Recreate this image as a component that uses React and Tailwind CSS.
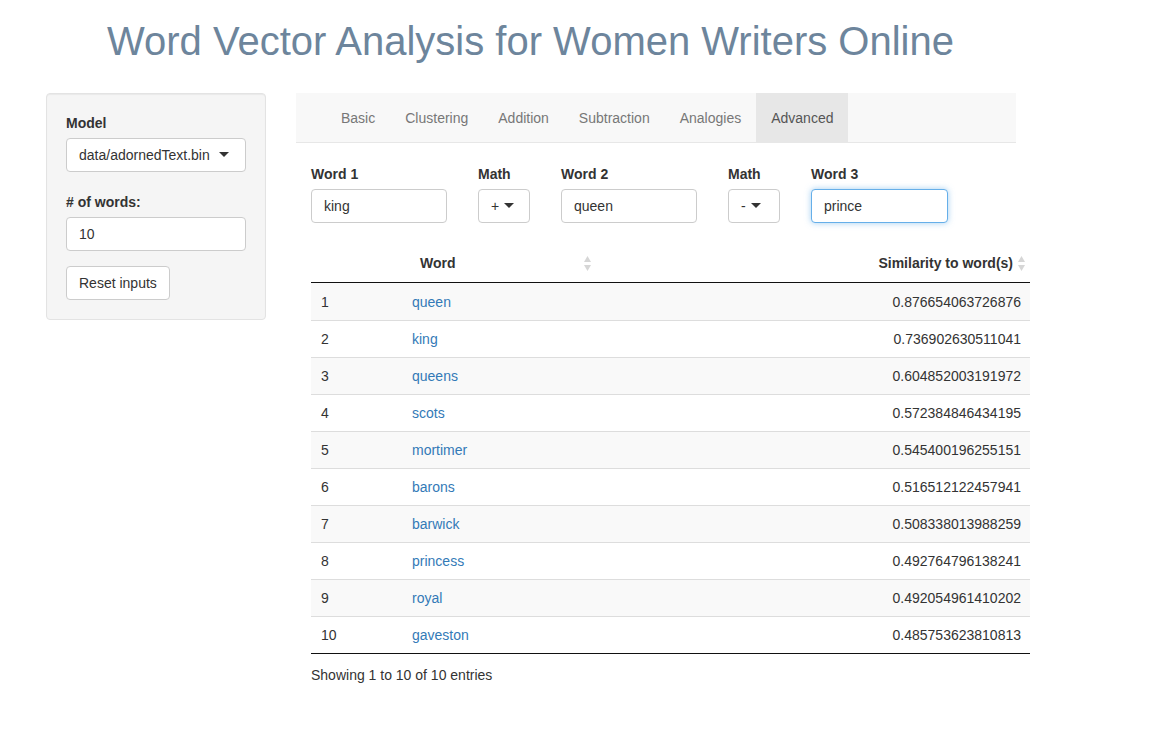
import React from "react";

const rows = [
  ["queen", "0.876654063726876"],
  ["king", "0.736902630511041"],
  ["queens", "0.604852003191972"],
  ["scots", "0.572384846434195"],
  ["mortimer", "0.545400196255151"],
  ["barons", "0.516512122457941"],
  ["barwick", "0.508338013988259"],
  ["princess", "0.492764796138241"],
  ["royal", "0.492054961410202"],
  ["gaveston", "0.485753623810813"],
];

const tabs = ["Basic", "Clustering", "Addition", "Subtraction", "Analogies", "Advanced"];

const Caret = () => (
  <svg width="10" height="6" viewBox="0 0 10 6" className="inline-block">
    <path d="M0 0 L10 0 L5 5 Z" fill="#333" />
  </svg>
);

const SortIcon = () => (
  <svg width="9" height="17" viewBox="0 0 9 17">
    <path d="M4.5 1 L8 7 L1 7 Z" fill="#d6d6d6" />
    <path d="M1 10 L8 10 L4.5 16 Z" fill="#d6d6d6" />
  </svg>
);

function TextInput({ value, focus, width }) {
  return (
    <div
      className={
        "h-[34px] rounded-[4px] bg-white px-3 flex items-center border " +
        (focus
          ? "border-[#66afe9] shadow-[0_0_6px_rgba(102,175,233,0.6)]"
          : "border-[#ccc]")
      }
      style={{ width }}
    >
      {value}
    </div>
  );
}

function MathSelect({ value }) {
  return (
    <div className="h-[34px] w-[52px] rounded-[4px] bg-white border border-[#ccc] flex items-center pl-3 gap-[5px]">
      <span>{value}</span>
      <Caret />
    </div>
  );
}

export default function App() {
  return (
    <div className="min-h-screen bg-white text-[14px] text-[#333] font-['Liberation_Sans',Arial,sans-serif]">
      <h1 className="pl-[107px] pt-[14px] text-[40px] leading-[54px] text-[#6d859c] font-normal">
        Word Vector Analysis for Women Writers Online
      </h1>

      <div className="flex items-start mt-[25px]">
        <div className="ml-[46px] w-[220px] bg-[#f5f5f5] border border-[#e3e3e3] rounded-[4px] p-[19px] shadow-[inset_0_1px_1px_rgba(0,0,0,0.05)]">
          <div className="font-bold leading-5 mb-[5px]">Model</div>
          <div className="h-[34px] rounded-[4px] bg-white border border-[#ccc] flex items-center justify-between pl-3 pr-[16px]">
            <span>data/adornedText.bin</span>
            <Caret />
          </div>
          <div className="font-bold leading-5 mt-[20px] mb-[5px]">
            # of words:
          </div>
          <div className="h-[34px] rounded-[4px] bg-white border border-[#ccc] flex items-center px-3">
            10
          </div>
          <div className="mt-[15px] inline-flex h-[34px] items-center px-3 rounded-[4px] bg-white border border-[#ccc]">
            Reset inputs
          </div>
        </div>

        <div className="ml-[30px] w-[720px]">
          <div className="h-[50px] bg-[#f8f8f8] border-b border-[#e7e7e7] flex pl-[30px]">
            {tabs.map((t) => (
              <div
                key={t}
                className={
                  "px-[15px] pt-[2px] flex items-center " +
                  (t === "Advanced"
                    ? "bg-[#e7e7e7] text-[#555]"
                    : "text-[#777]")
                }
              >
                {t}
              </div>
            ))}
          </div>

          <div className="pl-[15px] mt-[21px] flex">
            {[
              ["Word 1", <TextInput value="king" width={136} />, 167],
              ["Math", <MathSelect value="+" />, 83],
              ["Word 2", <TextInput value="queen" width={136} />, 167],
              ["Math", <MathSelect value="-" />, 83],
              ["Word 3", <TextInput value="prince" width={137} focus />, 167],
            ].map(([label, control, w], i) => (
              <div key={i} style={{ width: w }}>
                <div className="font-bold leading-5 mb-[5px]">{label}</div>
                {control}
              </div>
            ))}
          </div>

          <div className="ml-[15px] w-[719px] mt-[22px]">
            <div className="flex h-[38px] items-center font-bold border-b border-[#111]">
              <div className="w-[91px]" />
              <div className="w-[198px] flex items-center justify-between pl-[18px] pr-[8px]">
                <span>Word</span>
                <SortIcon />
              </div>
              <div className="flex-1 flex items-center justify-end pr-[4px]">
                <span className="mr-[4px]">Similarity to word(s)</span>
                <SortIcon />
              </div>
            </div>
            {rows.map(([w, v], i) => (
              <div
                key={w}
                className={
                  "flex items-center " +
                  (i > 0 ? "h-[37px] border-t border-[#ddd] " : "h-[37px] pt-[2px] ") +
                  (i % 2 === 0 ? "bg-[#f9f9f9]" : "bg-white")
                }
              >
                <div className="w-[91px] pl-[10px]">{i + 1}</div>
                <div className="w-[198px] pl-[10px] text-[#337ab7]">{w}</div>
                <div className="flex-1 text-right pr-[9px]">{v}</div>
              </div>
            ))}
            <div className="border-t border-[#111]" />
            <div className="pt-[11px] leading-5">
              Showing 1 to 10 of 10 entries
            </div>
          </div>
        </div>
      </div>
    </div>
  );
}
